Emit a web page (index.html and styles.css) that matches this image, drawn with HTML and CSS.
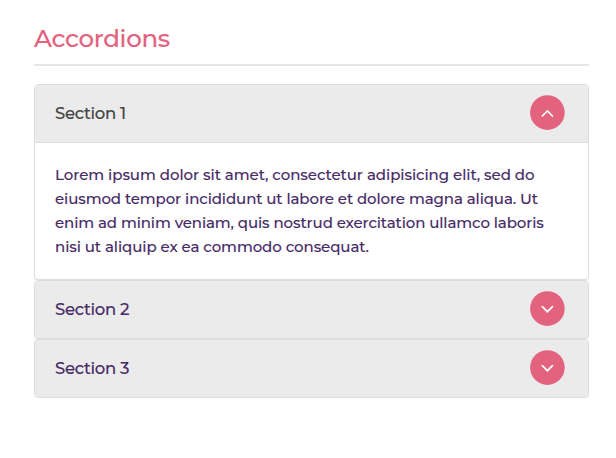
FILE: index.html
```html
<!DOCTYPE html>
<html lang="en">
<head>
<meta charset="utf-8">
<title>Accordions</title>
<link rel="stylesheet" href="styles.css">
</head>
<body>
<main class="page">
  <h1 class="title"><span>Accordions</span></h1>
  <div class="accordion">
    <section class="panel">
      <h2 class="head open"><span class="label first">Section 1</span>
        <svg class="toggle" viewBox="0 0 35 35"><circle cx="17.4" cy="17.6" r="17.3"/><path d="M12.3 21 17.4 16 22.5 21"/></svg></h2>
      <p class="body">
        <span class="line l1">Lorem ipsum dolor sit amet, consectetur adipisicing elit, sed do</span>
        <span class="line l2">eiusmod tempor incididunt ut labore et dolore magna aliqua. Ut</span>
        <span class="line l3">enim ad minim veniam, quis nostrud exercitation ullamco laboris</span>
        <span class="line l4">nisi ut aliquip ex ea commodo consequat.</span>
      </p>
    </section>
    <section class="panel">
      <h2 class="head"><span class="label">Section 2</span>
        <svg class="toggle" viewBox="0 0 35 35"><circle cx="17.4" cy="17.6" r="17.3"/><path d="M12.3 15.7 17.4 20.7 22.5 15.7"/></svg></h2>
    </section>
    <section class="panel">
      <h2 class="head"><span class="label">Section 3</span>
        <svg class="toggle" viewBox="0 0 35 35"><circle cx="17.4" cy="17.6" r="17.3"/><path d="M12.3 15.7 17.4 20.7 22.5 15.7"/></svg></h2>
    </section>
  </div>
</main>
</body>
</html>
```
FILE: styles.css
```css
* { box-sizing: border-box; }
body {
  margin: 0;
  background: #fff;
  color: #472b67;
  font-family: Montserrat, Inter, sans-serif;
  font-weight: 500;
  -webkit-text-stroke: 0.1px currentColor;
}
.page { padding: 20px 27px 0 34px; }
.title {
  height: 46px;
  margin: 0 0 18px;
  border-bottom: 2px solid #e6e6e6;
  color: #e3637f;
  font-size: 24.5px;
  font-weight: 500;
  line-height: 36px;
  letter-spacing: -0.3px;
}
.panel {
  border: 1px solid #ddd;
  border-radius: 4px;
  background: #fff;
  box-shadow: 0 1px 1px rgba(0, 0, 0, 0.05);
  overflow: hidden;
}
.head {
  display: flex;
  align-items: center;
  justify-content: space-between;
  height: 57px;
  margin: 0;
  padding: 0 23px 2px 20px;
  background: #ebebeb;
  font-size: 16.5px;
  font-weight: 500;
  letter-spacing: -0.3px;
}
.head.open {
  height: 58px;
  border-bottom: 1px solid #ddd;
}
.first { color: #444; }
.toggle { width: 35px; height: 35px; }
.toggle circle { fill: #e3637f; }
.toggle path {
  fill: none;
  stroke: #fff;
  stroke-width: 1.7;
  stroke-linecap: round;
}
.body {
  margin: 0;
  padding: 20px;
  font-size: 15px;
  line-height: 24px;
}
.line {
  display: block;
  white-space: nowrap;
}
.l1 { letter-spacing: -0.05px; }
.l2, .l3 { letter-spacing: -0.1px; }
.l4 { letter-spacing: -0.075px; }
```
